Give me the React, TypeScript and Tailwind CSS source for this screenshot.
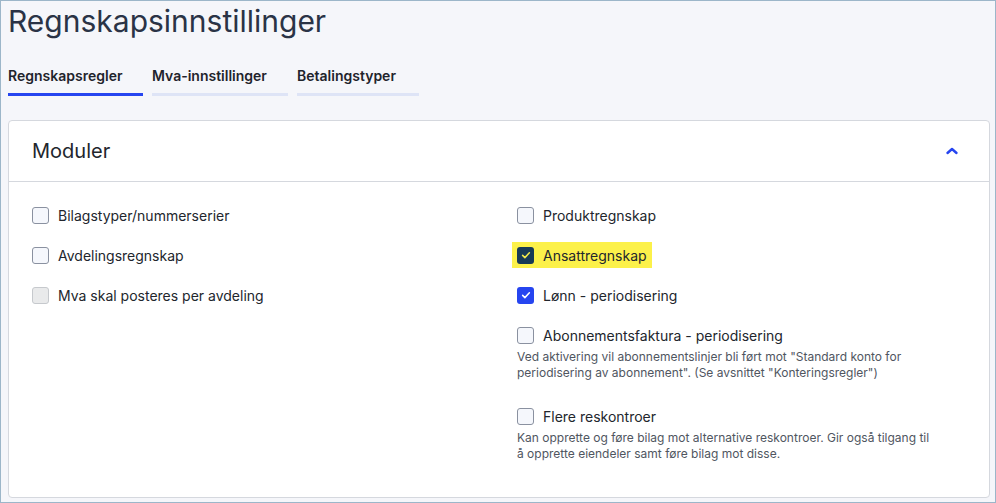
import React from "react";

type Item = {
  label: string;
  state?: "off" | "disabled" | "checked" | "dark";
  highlight?: boolean;
  desc?: string[];
};

const left: Item[] = [
  { label: "Bilagstyper/nummerserier" },
  { label: "Avdelingsregnskap" },
  { label: "Mva skal posteres per avdeling", state: "disabled" },
];

const right: Item[] = [
  { label: "Produktregnskap" },
  { label: "Ansattregnskap", state: "dark", highlight: true },
  { label: "Lønn - periodisering", state: "checked" },
  {
    label: "Abonnementsfaktura - periodisering",
    desc: [
      'Ved aktivering vil abonnementslinjer bli ført mot "Standard konto for',
      'periodisering av abonnement". (Se avsnittet "Konteringsregler")',
    ],
  },
  {
    label: "Flere reskontroer",
    desc: [
      "Kan opprette og føre bilag mot alternative reskontroer. Gir også tilgang til",
      "å opprette eiendeler samt føre bilag mot disse.",
    ],
  },
];

const tabs = [
  { label: "Regnskapsregler", width: "w-[135px]", active: true },
  { label: "Mva-innstillinger", width: "w-[136px]", active: false },
  { label: "Betalingstyper", width: "w-[122px]", active: false },
];

function Box({ state = "off" }: { state?: Item["state"] }) {
  if (state === "checked" || state === "dark") {
    const dark = state === "dark";
    return (
      <span
        className={`flex h-[17px] w-[17px] shrink-0 items-center justify-center rounded-[3px] ${
          dark ? "bg-[#173a56]" : "bg-[#2645f0]"
        }`}
      >
        <svg viewBox="0 0 16 16" className="h-[12px] w-[12px]" fill="none">
          <path
            d="M3.5 8.5l3 3 6-6.5"
            stroke={dark ? "#f2ea4c" : "#ffffff"}
            strokeWidth="2"
            strokeLinecap="round"
            strokeLinejoin="round"
          />
        </svg>
      </span>
    );
  }
  return (
    <span
      className={`h-[17px] w-[17px] shrink-0 rounded-[3px] border ${
        state === "disabled"
          ? "border-[#c6c9cd] bg-[#e9eaeb]"
          : "border-[#8a91a0] bg-[#f5f7fc]"
      }`}
    />
  );
}

function Row({ item }: { item: Item }) {
  return (
    <div className="flex flex-col">
      <div className="flex">
        <div
          className={`flex h-5 items-center gap-[9px] ${
            item.highlight ? "-mx-[5px] -my-[3px] box-content bg-[#fcf14a] px-[5px] py-[3px]" : ""
          }`}
        >
          <Box state={item.state} />
          <span className="text-[14px] text-[#22262d]">{item.label}</span>
        </div>
      </div>
      {item.desc && (
        <div className="mt-[4px] mb-[5px] text-[12px] leading-4 text-[#50565f]">
          {item.desc.map((d) => (
            <div key={d}>{d}</div>
          ))}
        </div>
      )}
    </div>
  );
}

export default function App() {
  return (
    <div
      className="h-[503px] w-[996px] overflow-hidden border border-[#9cb6c9] bg-[#f5f6fa] pl-[7px] pr-[5px]"
      style={{ fontFamily: "Inter, 'Noto Sans', sans-serif" }}
    >
      {/* Title */}
      <h1 className="pt-[2px] text-[30px] leading-[36px] text-[#2a3346]">
        Regnskapsinnstillinger
      </h1>

      {/* Tabs */}
      <div className="mt-[27px] flex gap-[9px]">
        {tabs.map((t) => (
          <div key={t.label} className={`${t.width} flex flex-col`}>
            <span className="text-[14px] font-semibold leading-5 text-[#1f242c]">{t.label}</span>
            <span
              className={`mt-[7px] h-[3px] w-full ${t.active ? "bg-[#2645f0]" : "bg-[#dee4f6]"}`}
            />
          </div>
        ))}
      </div>

      {/* Card */}
      <div className="mt-[24px] h-[378px] rounded-[4px] border border-[#d5d8de] bg-white">
        <div className="flex h-[61px] items-center justify-between border-b border-[#d5d8de] pl-[23px] pr-[29px]">
          <span className="text-[20px] text-[#22262d]">Moduler</span>
          <svg viewBox="0 0 16 16" className="h-4 w-4" fill="none">
            <path
              d="M3.5 10l4.5-4 4.5 4"
              stroke="#2645f0"
              strokeWidth="2.4"
              strokeLinecap="round"
              strokeLinejoin="round"
            />
          </svg>
        </div>
        <div className="grid grid-cols-[485px_1fr] pl-[23px] pt-[23px]">
          <div className="flex flex-col gap-5">
            {left.map((i) => (
              <Row key={i.label} item={i} />
            ))}
          </div>
          <div className="flex flex-col gap-5">
            {right.map((i) => (
              <Row key={i.label} item={i} />
            ))}
          </div>
        </div>
      </div>
    </div>
  );
}
